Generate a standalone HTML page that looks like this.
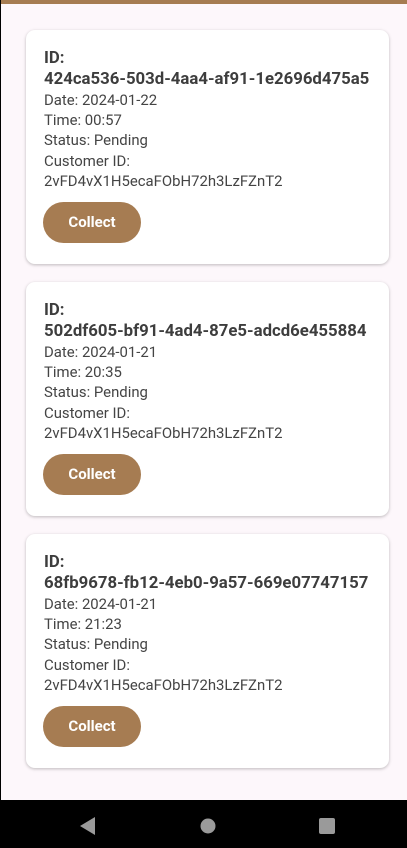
<!DOCTYPE html>
<html><head><style>
html,body{margin:0;padding:0;}
body{width:407px;height:848px;position:relative;overflow:hidden;background:#fdf7fb;font-family:"Roboto","Liberation Sans",sans-serif;}
.top{position:absolute;left:0;top:0;width:407px;height:4px;background:#a67c52;}
.side{position:absolute;left:0;top:0;width:1px;height:800px;background:#000;}
.card{position:absolute;left:26px;width:363px;height:234px;background:#fff;border-radius:9px;box-shadow:0 1px 3px rgba(0,0,0,.25);}
.in{position:absolute;left:18px;top:18px;color:#444;font-size:14.9px;line-height:20.2px;white-space:nowrap;}
.id{font-weight:bold;font-size:16.75px;color:#3d3d3d;line-height:21px;}
.btn{position:absolute;left:17px;top:172px;width:98px;height:41px;border-radius:21px;background:#a67c52;color:#fff;font-size:15px;font-weight:bold;text-align:center;line-height:41px;}
.nav{position:absolute;left:0;top:800px;width:407px;height:48px;background:#000;}
</style></head><body>
<div class="top"></div><div class="side"></div>

<div class="card" style="top:30px"><div class="in"><div class="id">ID:<br>424ca536-503d-4aa4-af91-1e2696d475a5</div>Date: 2024-01-22<br>Time: 00:57<br>Status: Pending<br>Customer ID:<br>2vFD4vX1H5ecaFObH72h3LzFZnT2</div><div class="btn">Collect</div></div>

<div class="card" style="top:282px"><div class="in"><div class="id">ID:<br>502df605-bf91-4ad4-87e5-adcd6e455884</div>Date: 2024-01-21<br>Time: 20:35<br>Status: Pending<br>Customer ID:<br>2vFD4vX1H5ecaFObH72h3LzFZnT2</div><div class="btn">Collect</div></div>

<div class="card" style="top:534px"><div class="in"><div class="id">ID:<br>68fb9678-fb12-4eb0-9a57-669e07747157</div>Date: 2024-01-21<br>Time: 21:23<br>Status: Pending<br>Customer ID:<br>2vFD4vX1H5ecaFObH72h3LzFZnT2</div><div class="btn">Collect</div></div>

<div class="nav">
<svg width="407" height="48" style="position:absolute;left:0;top:0">
<polygon points="80,26 95,17 95,35" fill="#9a9a9a"/>
<circle cx="208" cy="26" r="7.5" fill="#9a9a9a"/>
<rect x="319" y="18" width="16" height="16" rx="2" fill="#9a9a9a"/>
</svg>
</div>
</body></html>
